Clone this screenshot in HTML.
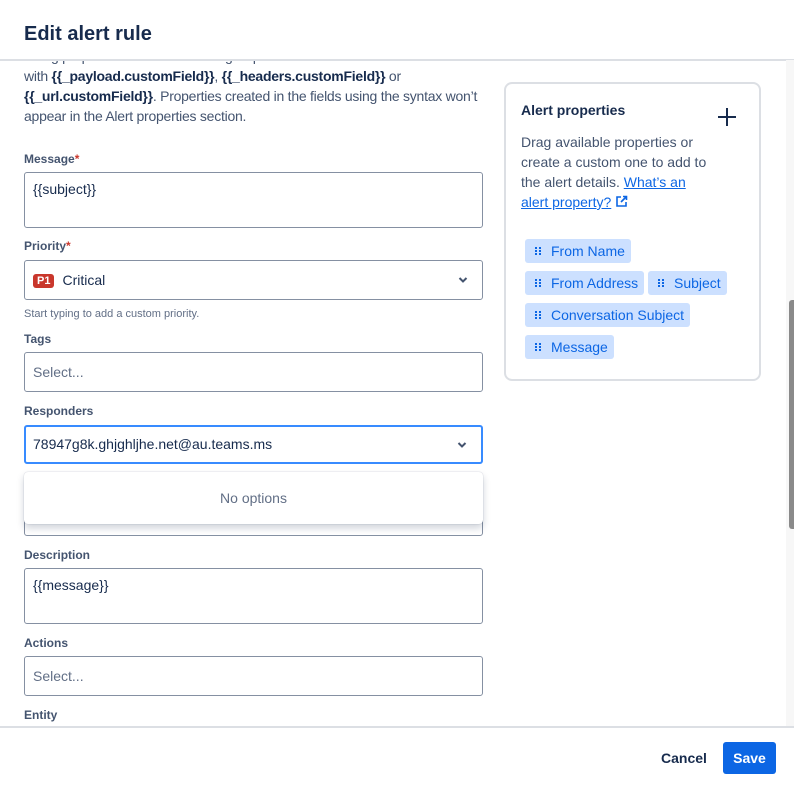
<!DOCTYPE html>
<html><head><meta charset="utf-8"><style>
*{box-sizing:border-box;margin:0;padding:0}
body{width:794px;height:793px;overflow:hidden;background:#fff;font-family:"Liberation Sans",sans-serif;color:#172b4d;position:relative}
.abs{position:absolute}
.lbl{position:absolute;left:24px;font-size:12px;font-weight:bold;color:#44546f}
.req{color:#c9372c}
.inp{position:absolute;left:24px;width:459px;border:1px solid #8590a2;border-radius:3px;font-size:14px;color:#172b4d;padding:0 8px}
.ph{color:#626f86}
.chev{position:absolute;right:14px;top:50%;margin-top:-4px}
.chip{position:absolute;height:24px;background:#cce0ff;border-radius:3px;color:#0c66e4;font-size:14px;line-height:24px;padding:0 6px 0 26px;white-space:nowrap}
.chip:before{content:"";position:absolute;left:10px;top:8px;width:2px;height:2px;background:#0c66e4;box-shadow:4px 0 #0c66e4,0 3px #0c66e4,4px 3px #0c66e4,0 6px #0c66e4,4px 6px #0c66e4}
</style></head><body>
<div class="abs" style="left:24px;top:23px;font-size:20px;font-weight:bold;color:#172b4d">Edit alert rule</div>
<div class="abs" style="left:0;top:60px;width:786px;height:666px;overflow:hidden">
 <div class="abs" style="left:24px;top:-14px;width:470px;font-size:14px;line-height:20px;color:#44546f;letter-spacing:-0.25px">
 Using properties from the incoming request<br>with <b style="color:#172b4d">{{_payload.customField}}</b>, <b style="color:#172b4d">{{_headers.customField}}</b> or<br><b style="color:#172b4d">{{_url.customField}}</b>. Properties created in the fields using the syntax won’t<br>appear in the Alert properties section.</div>
</div>
<div class="abs" style="left:0;top:59px;width:794px;height:2px;background:#dcdfe4"></div>
<div class="lbl" style="top:152px">Message<span class="req">*</span></div>
<div class="inp" style="top:172px;height:56px;padding-top:8px">{{subject}}</div>
<div class="lbl" style="top:239px">Priority<span class="req">*</span></div>
<div class="inp" style="top:260px;height:40px;line-height:38px;padding-left:8px"><span style="display:inline-block;background:#c9372c;color:#fff;font-size:11px;font-weight:bold;border-radius:3px;line-height:14px;padding:0 4px;vertical-align:1px;margin-right:8px">P1</span>Critical<svg class="chev" width="10" height="8" viewBox="0 0 10 8"><path d="M1.5 2l3.5 3.5 3.5-3.5" stroke="#44546f" stroke-width="2" fill="none"/></svg></div>
<div class="abs" style="left:24px;top:308px;font-size:11px;color:#626f86">Start typing to add a custom priority.</div>
<div class="lbl" style="top:332px">Tags</div>
<div class="inp ph" style="top:352px;height:40px;line-height:38px"><span class="ph">Select...</span></div>
<div class="lbl" style="top:404px">Responders</div>
<div class="inp" style="top:425px;height:39px;line-height:35px;border:2px solid #388bff;padding-left:7px">78947g8k.ghjghljhe.net@au.teams.ms<svg class="chev" width="10" height="8" viewBox="0 0 10 8"><path d="M1.5 2l3.5 3.5 3.5-3.5" stroke="#44546f" stroke-width="2" fill="none"/></svg></div>
<div class="inp" style="top:496px;height:40px"></div>
<div class="abs" style="left:24px;top:472px;width:459px;height:52px;background:#fff;border-radius:4px;box-shadow:0 4px 8px rgba(9,30,66,.2),0 0 1px rgba(9,30,66,.3);text-align:center;line-height:52px;font-size:14px;color:#626f86">No options</div>
<div class="lbl" style="top:548px">Description</div>
<div class="inp" style="top:568px;height:56px;padding-top:8px">{{message}}</div>
<div class="lbl" style="top:636px">Actions</div>
<div class="inp" style="top:656px;height:40px;line-height:38px"><span class="ph">Select...</span></div>
<div class="lbl" style="top:708px">Entity</div>

<div class="abs" style="left:504px;top:82px;width:257px;height:299px;border:2px solid #dcdfe4;border-radius:8px">
 <div class="abs" style="left:15px;top:18px;font-size:14px;font-weight:bold">Alert properties</div>
 <svg class="abs" style="left:210px;top:22px" width="22" height="22" viewBox="0 0 22 22"><path d="M11 2v18M2 11h18" stroke="#172b4d" stroke-width="2"/></svg>
 <div class="abs" style="left:15px;top:48px;width:200px;font-size:14px;line-height:20px;color:#44546f">Drag available properties or create a custom one to add to the alert details. <span style="color:#0c66e4;text-decoration:underline">What’s an</span><br><span style="color:#0c66e4;text-decoration:underline">alert property?</span> <svg width="13" height="13" viewBox="0 0 13 13" style="vertical-align:-1px"><path d="M6 2H2v9h9V7M8 1.5h3.5V5M11.5 1.5L6 7" stroke="#0c66e4" stroke-width="1.6" fill="none"/></svg></div>
</div>
<div class="chip" style="left:525px;top:239px">From Name</div>
<div class="chip" style="left:525px;top:271px">From Address</div>
<div class="chip" style="left:648px;top:271px">Subject</div>
<div class="chip" style="left:525px;top:303px">Conversation Subject</div>
<div class="chip" style="left:525px;top:335px">Message</div>

<div class="abs" style="left:786px;top:60px;width:8px;height:666px;background:#f7f7f7"></div>
<div class="abs" style="left:789px;top:300px;width:5px;height:229px;background:#8a8a8a;border-radius:3px 0 0 3px"></div>
<div class="abs" style="left:0;top:726px;width:794px;height:2px;background:#dcdfe4"></div>
<div class="abs" style="left:661px;top:750px;font-size:14px;font-weight:bold;color:#172b4d">Cancel</div>
<div class="abs" style="left:723px;top:742px;width:53px;height:32px;background:#0c66e4;border-radius:3px;color:#fff;font-size:14px;font-weight:bold;text-align:center;line-height:32px">Save</div>
</body></html>
